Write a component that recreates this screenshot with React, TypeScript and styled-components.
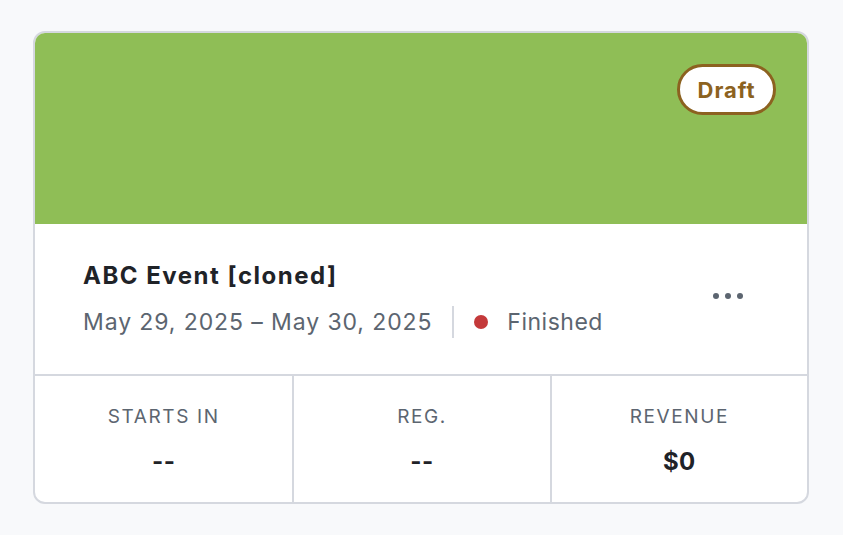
import React from "react";
import styled, { createGlobalStyle } from "styled-components";

const GlobalStyle = createGlobalStyle`
  html, body {
    margin: 0;
    padding: 0;
    background: #f8f9fb;
  }
  body {
    font-family: Inter, "Noto Sans", "Liberation Sans", sans-serif;
    -webkit-font-smoothing: antialiased;
  }
`;

const colors = {
  border: "#d5d8df",
  green: "#8fbe56",
  brown: "#8c6220",
  ink: "#1f2328",
  muted: "#5c6570",
  red: "#c4393a",
};

const Page = styled.main`
  padding: 31px 33px;
`;

const Card = styled.article`
  width: 776px;
  box-sizing: border-box;
  border: 2px solid ${colors.border};
  border-radius: 12px;
  background: #ffffff;
  overflow: hidden;
`;

const Banner = styled.div`
  height: 191px;
  background: ${colors.green};
  display: flex;
  justify-content: flex-end;
  align-items: flex-start;
  padding: 31px 31px 0 0;
  box-sizing: border-box;
`;

const StatusBadge = styled.span`
  display: inline-flex;
  align-items: center;
  justify-content: center;
  height: 51px;
  width: 99px;
  box-sizing: border-box;
  border: 3px solid ${colors.brown};
  border-radius: 26px;
  background: #ffffff;
  color: ${colors.brown};
  font-size: 22px;
  font-weight: 700;
  letter-spacing: 0.9px;
`;

const Summary = styled.section`
  display: flex;
  align-items: center;
  justify-content: space-between;
  height: 152px;
  box-sizing: border-box;
  padding: 0 64px 0 48px;
  border-bottom: 2px solid ${colors.border};
`;

const Details = styled.div`
  display: flex;
  flex-direction: column;
  gap: 15px;
`;

const Title = styled.h3`
  margin: 0;
  font-size: 24px;
  line-height: 30px;
  font-weight: 700;
  letter-spacing: 1.5px;
  color: ${colors.ink};
`;

const MetaRow = styled.div`
  display: flex;
  align-items: center;
  font-size: 23px;
  line-height: 30px;
  letter-spacing: 0.9px;
  color: ${colors.muted};
`;

const Divider = styled.span`
  width: 2px;
  height: 32px;
  background: ${colors.border};
  margin: 0 20px;
`;

const Dot = styled.span<{ $color: string }>`
  width: 14px;
  height: 14px;
  border-radius: 50%;
  background: ${(p) => p.$color};
  margin-right: 19px;
`;

const StatusText = styled.span`
  letter-spacing: 0.5px;
`;

const MoreButton = styled.button`
  border: none;
  background: transparent;
  padding: 0;
  margin-bottom: 6px;
  color: ${colors.muted};
  cursor: pointer;
  display: flex;
`;

const Stats = styled.section`
  display: grid;
  grid-template-columns: 1fr 1fr 1fr;
  height: 126px;
`;

const Stat = styled.div`
  display: flex;
  flex-direction: column;
  align-items: center;
  justify-content: center;
  gap: 20px;
  padding-top: 3px;
  & + & {
    border-left: 2px solid ${colors.border};
  }
`;

const StatLabel = styled.span`
  font-size: 19px;
  line-height: 22px;
  letter-spacing: 1.6px;
  text-transform: uppercase;
  color: ${colors.muted};
`;

const StatValue = styled.span`
  font-size: 24px;
  line-height: 28px;
  font-weight: 700;
  letter-spacing: 0.5px;
  color: ${colors.ink};
`;

const stats = [
  { label: "Starts in", value: "--" },
  { label: "Reg.", value: "--" },
  { label: "Revenue", value: "$0" },
];

const App = () => {
  return (
    <Page>
      <GlobalStyle />
      <Card>
        <Banner>
          <StatusBadge>Draft</StatusBadge>
        </Banner>
        <Summary>
          <Details>
            <Title>ABC Event [cloned]</Title>
            <MetaRow>
              <span>May 29, 2025 – May 30, 2025</span>
              <Divider />
              <Dot $color={colors.red} />
              <StatusText>Finished</StatusText>
            </MetaRow>
          </Details>
          <MoreButton aria-label="More actions">
            <svg width="30" height="8" viewBox="0 0 30 8" fill="currentColor">
              <circle cx="3" cy="4" r="3" />
              <circle cx="15" cy="4" r="3" />
              <circle cx="27" cy="4" r="3" />
            </svg>
          </MoreButton>
        </Summary>
        <Stats>
          {stats.map((s) => (
            <Stat key={s.label}>
              <StatLabel>{s.label}</StatLabel>
              <StatValue>{s.value}</StatValue>
            </Stat>
          ))}
        </Stats>
      </Card>
    </Page>
  );
};

export default App;
